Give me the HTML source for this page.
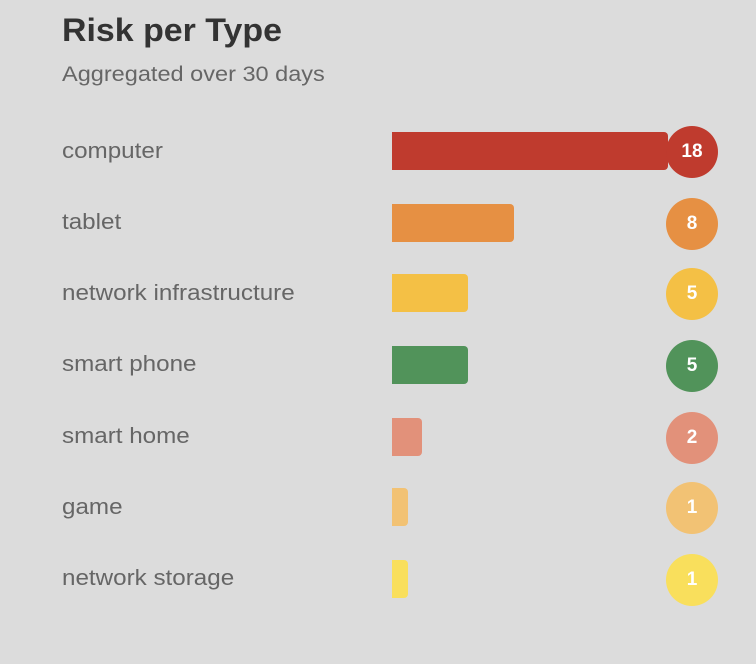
<!DOCTYPE html>
<html><head><style>
body{margin:0;width:756px;height:664px;background:#dcdcdc;font-family:"Liberation Sans",Roboto,sans-serif;position:relative;overflow:hidden}
h1{position:absolute;left:62px;top:12px;margin:0;font-size:32px;font-weight:bold;color:#333;transform:scaleX(1.06);transform-origin:left}
.sub{position:absolute;left:62px;top:63px;font-size:21px;color:#666;transform:scaleX(1.12);transform-origin:left;white-space:nowrap}
.lbl{position:absolute;left:62px;font-size:22px;color:#666;line-height:24px;transform:scaleX(1.1);transform-origin:left;white-space:nowrap}
.bar{position:absolute;left:392px;height:38px;border-radius:0 4px 4px 0}
.c{position:absolute;left:666px;width:52px;height:52px;border-radius:50%;color:#fff;font-weight:bold;font-size:19px;text-align:center;line-height:52px}
</style></head><body>
<h1>Risk per Type</h1>
<div class="sub">Aggregated over 30 days</div>

<div class="lbl" style="top:139px">computer</div>
<div class="bar" style="top:132px;width:276px;background:#bf3b2e"></div>
<div class="c" style="top:126px;background:#bf3b2e">18</div>

<div class="lbl" style="top:210px">tablet</div>
<div class="bar" style="top:204px;width:122px;background:#e69043"></div>
<div class="c" style="top:198px;background:#e69043">8</div>

<div class="lbl" style="top:281px">network infrastructure</div>
<div class="bar" style="top:274px;width:76px;background:#f4c045"></div>
<div class="c" style="top:268px;background:#f4c045">5</div>

<div class="lbl" style="top:352px">smart phone</div>
<div class="bar" style="top:346px;width:76px;background:#51935a"></div>
<div class="c" style="top:340px;background:#51935a">5</div>

<div class="lbl" style="top:424px">smart home</div>
<div class="bar" style="top:418px;width:30px;background:#e2917a"></div>
<div class="c" style="top:412px;background:#e2917a">2</div>

<div class="lbl" style="top:495px">game</div>
<div class="bar" style="top:488px;width:16px;background:#f2c274"></div>
<div class="c" style="top:482px;background:#f2c274">1</div>

<div class="lbl" style="top:566px">network storage</div>
<div class="bar" style="top:560px;width:16px;background:#f9df5c"></div>
<div class="c" style="top:554px;background:#f9df5c">1</div>
</body></html>
